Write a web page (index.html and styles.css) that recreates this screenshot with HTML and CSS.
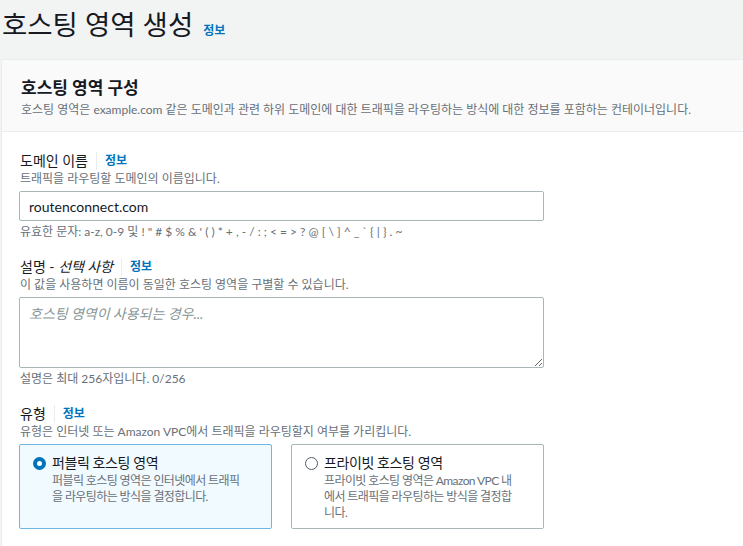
FILE: index.html
```html
<!DOCTYPE html>
<html lang="ko">
<head>
    <meta charset="UTF-8">
    <title>호스팅 영역 생성</title>
    <link rel="stylesheet" href="styles.css">
</head>
<body>
    <div class="page-header">
        <h1>호스팅 영역 생성</h1>
        <a class="info-link" href="#">정보</a>
    </div>

    <div class="card">
        <div class="card-header">
            <h2>호스팅 영역 구성</h2>
            <p>호스팅 영역은 example.com 같은 도메인과 관련 하위 도메인에 대한 트래픽을 라우팅하는 방식에 대한 정보를 포함하는 컨테이너입니다.</p>
        </div>

        <div class="card-body">
            <div class="field">
                <div class="label-row">
                    <span class="label">도메인 이름</span>
                    <a class="info-link small" href="#">정보</a>
                </div>
                <div class="desc">트래픽을 라우팅할 도메인의 이름입니다.</div>
                <input class="text-input" type="text" value="routenconnect.com">
                <div class="hint">유효한 문자: a-z, 0-9 및 ! " # $ % &amp; ' ( ) * + , - / : ; &lt; = &gt; ? @ [ \ ] ^ _ ` { | } . ~</div>
            </div>

            <div class="field">
                <div class="label-row">
                    <span class="label">설명 - <i>선택 사항</i></span>
                    <a class="info-link small" href="#">정보</a>
                </div>
                <div class="desc">이 값을 사용하면 이름이 동일한 호스팅 영역을 구별할 수 있습니다.</div>
                <textarea class="text-area" placeholder="호스팅 영역이 사용되는 경우..."></textarea>
                <div class="hint">설명은 최대 256자입니다. 0/256</div>
            </div>

            <div class="field">
                <div class="label-row">
                    <span class="label">유형</span>
                    <a class="info-link small" href="#">정보</a>
                </div>
                <div class="desc">유형은 인터넷 또는 Amazon VPC에서 트래픽을 라우팅할지 여부를 가리킵니다.</div>
                <div class="tiles">
                    <div class="tile selected">
                        <span class="radio checked"></span>
                        <div>
                            <div class="tile-title">퍼블릭 호스팅 영역</div>
                            <div class="tile-desc">퍼블릭 호스팅 영역은 인터넷에서 트래픽을 라우팅하는 방식을 결정합니다.</div>
                        </div>
                    </div>
                    <div class="tile">
                        <span class="radio"></span>
                        <div>
                            <div class="tile-title">프라이빗 호스팅 영역</div>
                            <div class="tile-desc">프라이빗 호스팅 영역은 Amazon VPC 내에서 트래픽을 라우팅하는 방식을 결정합니다.</div>
                        </div>
                    </div>
                </div>
            </div>
        </div>
    </div>
</body>
</html>
```

FILE: styles.css
```css
* {
    margin: 0;
    padding: 0;
    box-sizing: border-box;
}

body {
    background: #f2f3f3;
    font-family: Lato, 'Noto Sans CJK KR', sans-serif;
    color: #16191f;
    height: 100vh;
    display: flex;
    flex-direction: column;
    overflow: hidden;
}

.page-header {
    height: 59px;
    flex: none;
    display: flex;
    align-items: baseline;
    gap: 10px;
    padding: 5px 0 0 2px;
}

.page-header h1 {
    font-size: 27.5px;
    font-weight: 400;
    line-height: 40px;
}

.info-link {
    color: #0073bb;
    font-size: 12px;
    font-weight: 700;
    text-decoration: none;
}

.card {
    flex: 1;
    margin-left: 1px;
    background: #fff;
    border-top: 1px solid #eaeded;
    border-left: 1px solid #eaeded;
}

.card-header {
    background: #fafafa;
    border-bottom: 1px solid #eaeded;
    padding: 16px 19px 11px;
}

.card-header h2 {
    font-size: 17px;
    font-weight: 700;
    line-height: 24px;
}

.card-header p {
    font-size: 12px;
    color: #687078;
    line-height: 20px;
}

.card-body {
    padding: 19px 17px 14px;
}

.field {
    width: 525px;
    margin-bottom: 17px;
}

.field:last-child {
    margin-bottom: 0;
}

.label-row {
    display: flex;
    align-items: center;
    height: 20px;
    padding-left: 1px;
}

.label {
    font-size: 14px;
    padding-right: 8px;
    border-right: 1px solid #eaeded;
    line-height: 18px;
}

.label i {
    font-style: italic;
}

.info-link.small {
    padding-left: 8px;
    line-height: 18px;
}

.desc {
    font-size: 12px;
    color: #687078;
    line-height: 16px;
    margin-bottom: 4px;
    padding-left: 1px;
}

.text-input,
.text-area {
    display: block;
    width: 525px;
    border: 1px solid #aab7b8;
    border-radius: 2px;
    font-family: inherit;
    font-size: 14px;
    color: #16191f;
    outline: none;
}

.text-input {
    height: 30px;
    padding: 0 9px;
}

.text-area {
    height: 71px;
    padding: 5px 9px;
    resize: vertical;
}

.text-area::placeholder {
    color: #879596;
    font-style: italic;
}

.hint {
    font-size: 12px;
    color: #687078;
    line-height: 16px;
    margin-top: 3px;
    padding-left: 1px;
}

.tiles {
    display: flex;
    gap: 19px;
}

.tile {
    flex: 1;
    display: flex;
    gap: 6px;
    height: 85px;
    border: 1px solid #aab7b8;
    border-radius: 2px;
    padding: 8px 22px 0 13px;
}

.tile.selected {
    background: #f1faff;
    border-color: #6fb6e4;
}

.radio {
    flex: none;
    width: 13px;
    height: 13px;
    margin-top: 4px;
    border: 1.5px solid #545b64;
    border-radius: 50%;
}

.radio.checked {
    border: 4px solid #0073bb;
    background: #fff;
}

.tile-title {
    font-size: 14px;
    line-height: 20px;
    letter-spacing: -0.4px;
}

.tile-desc {
    font-size: 12px;
    color: #687078;
    line-height: 16px;
    letter-spacing: -0.6px;
}
```
